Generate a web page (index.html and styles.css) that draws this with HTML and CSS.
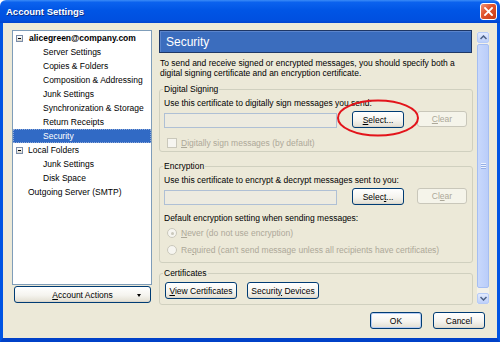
FILE: index.html
```html
<!DOCTYPE html>
<html lang="en">
<head>
    <meta charset="UTF-8">
    <title>Account Settings</title>
    <link rel="stylesheet" href="styles.css">
</head>
<body>
    <div class="window">
        <div class="titlebar">
            <span class="title">Account Settings</span>
            <span class="close">
                <svg width="9" height="9" viewBox="0 0 9 9"><path d="M1 1 L8 8 M8 1 L1 8" stroke="#fff" stroke-width="1.8" stroke-linecap="square"/></svg>
            </span>
        </div>
        <div class="client">
            <div class="main">
                <div class="sidebar">
                    <ul class="tree">
                        <li class="node account"><span class="toggle"></span>alicegreen@company.com</li>
                        <li class="node child">Server Settings</li>
                        <li class="node child">Copies &amp; Folders</li>
                        <li class="node child">Composition &amp; Addressing</li>
                        <li class="node child">Junk Settings</li>
                        <li class="node child">Synchronization &amp; Storage</li>
                        <li class="node child">Return Receipts</li>
                        <li class="node child selected">Security</li>
                        <li class="node folder"><span class="toggle"></span>Local Folders</li>
                        <li class="node child">Junk Settings</li>
                        <li class="node child">Disk Space</li>
                        <li class="node top">Outgoing Server (SMTP)</li>
                    </ul>
                    <button class="btn actions"><span><u>A</u>ccount Actions</span><span class="drop"></span></button>
                </div>
                <div class="pane">
                    <div class="pane-header">Security</div>
                    <p class="intro">To send and receive signed or encrypted messages, you should specify both a<br>digital signing certificate and an encryption certificate.</p>
                    <fieldset class="group">
                        <legend>Digital Signing</legend>
                        <div class="label">Use this certificate to digitally sign messages you send:</div>
                        <div class="cert-row">
                            <div class="field"></div>
                            <button class="btn select"><u>S</u>elect...</button>
                            <button class="btn clear" disabled><u>C</u>lear</button>
                        </div>
                        <div class="option disabled first"><span class="check"></span><span><u>D</u>igitally sign messages (by default)</span></div>
                    </fieldset>
                    <fieldset class="group encrypt">
                        <legend>Encryption</legend>
                        <div class="label">Use this certificate to encrypt &amp; decrypt messages sent to you:</div>
                        <div class="cert-row">
                            <div class="field"></div>
                            <button class="btn select">Selec<u>t</u>...</button>
                            <button class="btn clear" disabled>Cl<u>e</u>ar</button>
                        </div>
                        <div class="label spaced">Default encryption setting when sending messages:</div>
                        <div class="option disabled never"><span class="radio checked"></span><span><u>N</u>ever (do not use encryption)</span></div>
                        <div class="option disabled required"><span class="radio"></span><span>Re<u>q</u>uired (can't send message unless all recipients have certificates)</span></div>
                    </fieldset>
                    <fieldset class="group certs">
                        <legend>Certificates</legend>
                        <div class="cert-buttons">
                            <button class="btn wide"><u>V</u>iew Certificates</button>
                            <button class="btn wide">Securit<u>y</u> Devices</button>
                        </div>
                    </fieldset>
                </div>
                <div class="scrollbar">
                    <div class="arrow up"><svg width="7" height="5" viewBox="0 0 7 5"><path d="M0.5 4 L3.5 1 L6.5 4" fill="none" stroke="#4D6185" stroke-width="1.5"/></svg></div>
                    <div class="track"><div class="thumb"><span class="grip"></span></div></div>
                    <div class="arrow down"><svg width="7" height="5" viewBox="0 0 7 5"><path d="M0.5 1 L3.5 4 L6.5 1" fill="none" stroke="#4D6185" stroke-width="1.5"/></svg></div>
                </div>
            </div>
            <div class="footer">
                <button class="btn default">OK</button>
                <button class="btn cancel">Cancel</button>
            </div>
        </div>
        <svg class="callout" width="84" height="38" viewBox="0 0 84 38"><ellipse cx="42" cy="19" rx="40" ry="17.5" fill="none" stroke="#E3141B" stroke-width="2"/></svg>
    </div>
</body>
</html>
```

FILE: styles.css
```css
* {
    box-sizing: border-box;
}
body {
    margin: 0;
    font-family: "Liberation Sans", Arial, sans-serif;
    font-size: 8.5px;
    color: #000;
    background: #fff;
}
.window {
    position: relative;
    width: 500px;
    height: 342px;
    display: flex;
    flex-direction: column;
}
.titlebar {
    height: 23px;
    flex: none;
    display: flex;
    align-items: center;
    justify-content: space-between;
    padding: 0 3px 0 6px;
    background: linear-gradient(#3B8CF7 0%, #0B62EE 10%, #0055E5 45%, #0050E0 85%, #0043CF 100%);
    border-radius: 6px 6px 0 0;
}
.title {
    color: #fff;
    font-weight: bold;
    font-size: 9.5px;
    text-shadow: 1px 1px 0 #0A2F8C;
}
.close {
    width: 17px;
    height: 17px;
    display: flex;
    align-items: center;
    justify-content: center;
    border: 1px solid #fff;
    border-radius: 3px;
    background: linear-gradient(135deg, #F09478 0%, #E2562F 40%, #C83A14 100%);
}
.client {
    flex: 1;
    background: #ECE9D8;
    border: solid #0054E3;
    border-width: 0 3px 4px;
    border-bottom-color: #0041C8;
    padding: 7px 8px 0 9px;
}
.main {
    height: 275px;
    display: flex;
}
.sidebar {
    width: 140px;
    flex: none;
    display: flex;
    flex-direction: column;
}
.tree {
    list-style: none;
    margin: 0;
    padding: 0;
    height: 255px;
    background: #fff;
    border: 1px solid #7F9DB9;
}
.node {
    height: 14px;
    display: flex;
    align-items: center;
    white-space: nowrap;
}
.node.account {
    padding-left: 3px;
    font-weight: bold;
}
.node.folder {
    padding-left: 3px;
}
.node.child {
    padding-left: 30px;
}
.node.top {
    padding-left: 15px;
}
.node.selected {
    background: #316AC5;
    color: #fff;
    outline: 1px dotted #8FA9D8;
    outline-offset: -1px;
}
.toggle {
    position: relative;
    width: 7px;
    height: 7px;
    margin-right: 6px;
    border: 1px solid #7A8CA8;
    background: linear-gradient(#fff, #D8D6CC);
}
.node.folder .toggle {
    margin-right: 5px;
}
.toggle::after {
    content: "";
    position: absolute;
    left: 1px;
    top: 2px;
    width: 3px;
    height: 1px;
    background: #000;
}
.btn {
    font-family: inherit;
    font-size: 8.5px;
    color: #000;
    height: 17px;
    padding: 0;
    border: 1px solid #003C74;
    border-radius: 3px;
    background: linear-gradient(#FFFFFF 0%, #F5F4EF 55%, #E6E3D8 90%, #D6D0C5 100%);
    line-height: 14px;
}
.btn:disabled {
    color: #ACA899;
    border-color: #C9C7BA;
    background: #F5F4EA;
}
.actions {
    margin: 1px 1px 0 2px;
    display: flex;
    align-items: center;
    justify-content: center;
    position: relative;
}
.drop {
    position: absolute;
    right: 9px;
    top: 7px;
    border: 2.5px solid transparent;
    border-top: 3px solid #000;
    border-bottom: 0;
}
.pane {
    width: 314px;
    flex: none;
    margin-left: 7px;
    overflow: hidden;
}
.pane-header {
    height: 23px;
    display: flex;
    align-items: center;
    padding-left: 6px;
    color: #fff;
    font-size: 12px;
    background: #3B6DBE;
    border: 1px solid #1E3766;
    box-shadow: inset 1px 1px 0 #5A84CC;
    margin-right: 1px;
}
.intro {
    margin: 5px 0 0;
    padding-left: 1px;
    line-height: 10px;
    white-space: nowrap;
}
.group {
    margin: 6px 0 0;
    padding: 4px 5px 3px 4px;
    border: 1px solid #D0D0BF;
    border-radius: 3px;
    min-width: 0;
}
.group legend {
    padding: 0 1px;
    margin-left: -1px;
    line-height: 10px;
}
.group.encrypt {
    margin-top: 9px;
    padding-bottom: 7px;
}
.group.certs {
    margin-top: 5px;
    padding-bottom: 5px;
}
.label {
    line-height: 10px;
    white-space: nowrap;
}
.label.spaced {
    margin-top: 8px;
}
.cert-row {
    margin-top: 3px;
    height: 17px;
    display: flex;
    align-items: flex-end;
}
.field {
    flex: 1;
    height: 15px;
    border: 1px solid #AFC0D5;
    background: #EDEBE0;
}
.btn.select {
    width: 52px;
    margin-left: 15px;
}
.btn.clear {
    width: 50px;
    margin-left: 13px;
    height: 16px;
    margin-bottom: 1px;
}
.option {
    height: 10px;
    display: flex;
    align-items: center;
    white-space: nowrap;
}
.option.disabled {
    color: #ACA899;
}
.option.first {
    margin-top: 10px;
}
.option.never {
    margin-top: 5px;
}
.option.required {
    margin-top: 7px;
}
.check {
    width: 10px;
    height: 10px;
    margin: 0 4px 0 3px;
    border: 1px solid #CAC8BB;
    background: #F6F5F0;
}
.radio {
    position: relative;
    width: 10px;
    height: 10px;
    margin: 0 4px 0 3px;
    border: 1px solid #CAC8BB;
    border-radius: 50%;
    background: #F6F5F0;
}
.radio.checked::after {
    content: "";
    position: absolute;
    left: 2.5px;
    top: 2.5px;
    width: 3px;
    height: 3px;
    border-radius: 50%;
    background: #CAC8BB;
}
.cert-buttons {
    display: flex;
    padding-top: 0;
}
.btn.wide {
    width: 72px;
    margin-left: 1px;
}
.btn.wide + .btn.wide {
    margin-left: 10px;
}
.scrollbar {
    width: 12px;
    flex: none;
    margin: 2px 0 0 4px;
    height: 272px;
    display: flex;
    flex-direction: column;
    background: #F3F1EA;
}
.arrow {
    height: 11px;
    flex: none;
    display: flex;
    align-items: center;
    justify-content: center;
    border: 1px solid #B6CBF7;
    border-radius: 2px;
    background: linear-gradient(#E3EBFE, #BDD0FA);
}
.track {
    flex: 1;
    padding: 1px 0 5px;
    display: flex;
}
.thumb {
    flex: 1;
    display: flex;
    align-items: center;
    justify-content: center;
    border: 1px solid #A5BEF2;
    border-radius: 2px;
    background: linear-gradient(90deg, #C8D8FC, #BACDF9);
}
.grip {
    width: 5px;
    height: 6px;
    background: repeating-linear-gradient(#EEF3FE 0 1px, #94AEE6 1px 2px);
}
.footer {
    margin-top: 7px;
    padding-right: 4px;
    display: flex;
    justify-content: flex-end;
}
.btn.default {
    width: 52px;
    box-shadow: inset 0 0 0 1px #B7CDF4;
}
.btn.cancel {
    width: 52px;
    margin-left: 11px;
}
.callout {
    position: absolute;
    left: 336px;
    top: 99px;
}
```
